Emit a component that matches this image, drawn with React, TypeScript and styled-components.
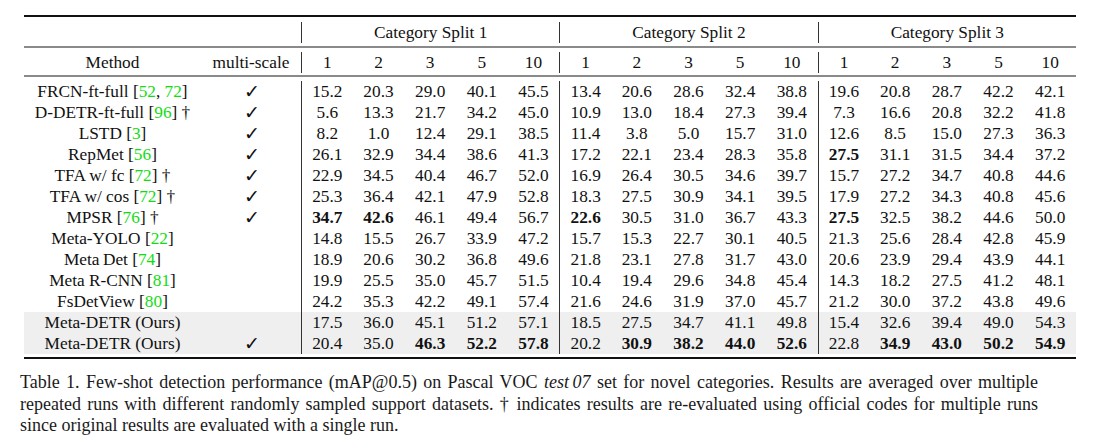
import React from "react";
import styled, { createGlobalStyle } from "styled-components";

const Global = createGlobalStyle`
  html, body { margin: 0; padding: 0; background: #ffffff; }
  body { font-family: "Liberation Serif", "Times New Roman", serif; color: #111; }
`;

const COLS = "177px 100px repeat(15, 1fr)";

const Page = styled.div`
  width: 1095px;
  height: 442px;
  overflow: hidden;
  padding-top: 15px;
  box-sizing: border-box;
`;

const Table = styled.div`
  margin-left: 24px;
  width: 1052px;
  font-size: 17.3px;
`;

const Rule = styled.div<{ $heavy?: boolean }>`
  height: 2px;
  background: ${(p) => (p.$heavy ? "#111" : "#8a8a8a")};
`;

const HeadRow = styled.div<{ $h: number; $pad: number }>`
  display: grid;
  grid-template-columns: ${COLS};
  height: ${(p) => p.$h}px;
  padding-top: ${(p) => p.$pad}px;
  box-sizing: border-box;
  align-items: start;
`;

const HeadCell = styled.div<{ $span?: number; $start?: boolean }>`
  grid-column: span ${(p) => p.$span ?? 1};
  height: 21px;
  line-height: 21px;
  text-align: center;
  white-space: nowrap;
  border-left: ${(p) => (p.$start ? "1px solid #333" : "none")};
`;

const Body = styled.div`
  padding: 4px 0 3px;
`;

const Row = styled.div<{ $shade?: boolean }>`
  display: grid;
  grid-template-columns: ${COLS};
  height: 21px;
  line-height: 21px;
  background: ${(p) => (p.$shade ? "#efefef" : "transparent")};
`;

const NameCell = styled.div`
  text-align: center;
  white-space: nowrap;
`;

const CheckCell = styled.div`
  text-align: center;
  font-family: "DejaVu Sans", sans-serif;
  font-size: 19px;
  line-height: 21px;
  padding-left: 2px;
  overflow: hidden;
`;

const NumCell = styled.div<{ $start?: boolean; $bold?: boolean }>`
  text-align: center;
  white-space: nowrap;
  font-weight: ${(p) => (p.$bold ? 700 : 400)};
  border-left: ${(p) => (p.$start ? "1px solid #333" : "none")};
`;

const Cite = styled.span`
  color: #12dc12;
`;

const Caption = styled.div`
  margin: 13px 0 0 20px;
  width: 1018px;
  font-size: 18px;
  line-height: 21.5px;
  color: #1a1a1a;
`;

const CaptionLine = styled.div<{ $last?: boolean }>`
  text-align: ${(p) => (p.$last ? "left" : "justify")};
  text-align-last: ${(p) => (p.$last ? "left" : "justify")};
  white-space: nowrap;
`;

const Ital = styled.i`
  font-style: italic;
`;

type Ref = { name: string; cites: string[]; dagger?: boolean };

type DataRow = {
  method: Ref;
  check: boolean;
  vals: string;
  shade?: boolean;
};

const rows: DataRow[] = [
  { method: { name: "FRCN-ft-full", cites: ["52", "72"] }, check: true, vals: "15.2 20.3 29.0 40.1 45.5 13.4 20.6 28.6 32.4 38.8 19.6 20.8 28.7 42.2 42.1" },
  { method: { name: "D-DETR-ft-full", cites: ["96"], dagger: true }, check: true, vals: "5.6 13.3 21.7 34.2 45.0 10.9 13.0 18.4 27.3 39.4 7.3 16.6 20.8 32.2 41.8" },
  { method: { name: "LSTD", cites: ["3"] }, check: true, vals: "8.2 1.0 12.4 29.1 38.5 11.4 3.8 5.0 15.7 31.0 12.6 8.5 15.0 27.3 36.3" },
  { method: { name: "RepMet", cites: ["56"] }, check: true, vals: "26.1 32.9 34.4 38.6 41.3 17.2 22.1 23.4 28.3 35.8 *27.5 31.1 31.5 34.4 37.2" },
  { method: { name: "TFA w/ fc", cites: ["72"], dagger: true }, check: true, vals: "22.9 34.5 40.4 46.7 52.0 16.9 26.4 30.5 34.6 39.7 15.7 27.2 34.7 40.8 44.6" },
  { method: { name: "TFA w/ cos", cites: ["72"], dagger: true }, check: true, vals: "25.3 36.4 42.1 47.9 52.8 18.3 27.5 30.9 34.1 39.5 17.9 27.2 34.3 40.8 45.6" },
  { method: { name: "MPSR", cites: ["76"], dagger: true }, check: true, vals: "*34.7 *42.6 46.1 49.4 56.7 *22.6 30.5 31.0 36.7 43.3 *27.5 32.5 38.2 44.6 50.0" },
  { method: { name: "Meta-YOLO", cites: ["22"] }, check: false, vals: "14.8 15.5 26.7 33.9 47.2 15.7 15.3 22.7 30.1 40.5 21.3 25.6 28.4 42.8 45.9" },
  { method: { name: "Meta\u2009Det", cites: ["74"] }, check: false, vals: "18.9 20.6 30.2 36.8 49.6 21.8 23.1 27.8 31.7 43.0 20.6 23.9 29.4 43.9 44.1" },
  { method: { name: "Meta R-CNN", cites: ["81"] }, check: false, vals: "19.9 25.5 35.0 45.7 51.5 10.4 19.4 29.6 34.8 45.4 14.3 18.2 27.5 41.2 48.1" },
  { method: { name: "FsDetView", cites: ["80"] }, check: false, vals: "24.2 35.3 42.2 49.1 57.4 21.6 24.6 31.9 37.0 45.7 21.2 30.0 37.2 43.8 49.6" },
  { method: { name: "Meta-DETR (Ours)", cites: [] }, check: false, shade: true, vals: "17.5 36.0 45.1 51.2 57.1 18.5 27.5 34.7 41.1 49.8 15.4 32.6 39.4 49.0 54.3" },
  { method: { name: "Meta-DETR (Ours)", cites: [] }, check: true, shade: true, vals: "20.4 35.0 *46.3 *52.2 *57.8 20.2 *30.9 *38.2 *44.0 *52.6 22.8 *34.9 *43.0 *50.2 *54.9" },
];

const shots = ["1", "2", "3", "5", "10"];

function MethodName({ m }: { m: Ref }) {
  return (
    <NameCell>
      {m.name}
      {m.cites.length > 0 && (
        <>
          {" ["}
          {m.cites.map((c, i) => (
            <React.Fragment key={c}>
              {i > 0 && ", "}
              <Cite>{c}</Cite>
            </React.Fragment>
          ))}
          {"]"}
        </>
      )}
      {m.dagger && " \u2020"}
    </NameCell>
  );
}

export default function App() {
  return (
    <Page>
      <Global />
      <Table>
        <Rule $heavy />
        <HeadRow $h={29} $pad={5}>
          <HeadCell $span={2} />
          {[1, 2, 3].map((n) => (
            <HeadCell key={n} $span={5} $start>
              Category Split {n}
            </HeadCell>
          ))}
        </HeadRow>
        <Rule />
        <HeadRow $h={27} $pad={4}>
          <HeadCell>Method</HeadCell>
          <HeadCell>multi-scale</HeadCell>
          {[0, 1, 2].map((s) =>
            shots.map((k, i) => (
              <HeadCell key={`${s}-${k}`} $start={i === 0}>
                {k}
              </HeadCell>
            ))
          )}
        </HeadRow>
        <Rule />
        <Body>
          {rows.map((r, ri) => (
            <Row key={ri} $shade={r.shade}>
              <MethodName m={r.method} />
              <CheckCell>{r.check ? "\u2713" : ""}</CheckCell>
              {r.vals.split(" ").map((v, i) => {
                const bold = v.startsWith("*");
                return (
                  <NumCell key={i} $start={i % 5 === 0} $bold={bold}>
                    {bold ? v.slice(1) : v}
                  </NumCell>
                );
              })}
            </Row>
          ))}
        </Body>
        <Rule $heavy />
      </Table>
      <Caption>
        <CaptionLine>
          Table 1. Few-shot detection performance (mAP@0.5) on Pascal VOC <Ital>test{"\u2009"}07</Ital> set for novel categories. Results are averaged over multiple
        </CaptionLine>
        <CaptionLine>
          repeated runs with different randomly sampled support datasets. † indicates results are re-evaluated using official codes for multiple runs
        </CaptionLine>
        <CaptionLine $last>since original results are evaluated with a single run.</CaptionLine>
      </Caption>
    </Page>
  );
}
